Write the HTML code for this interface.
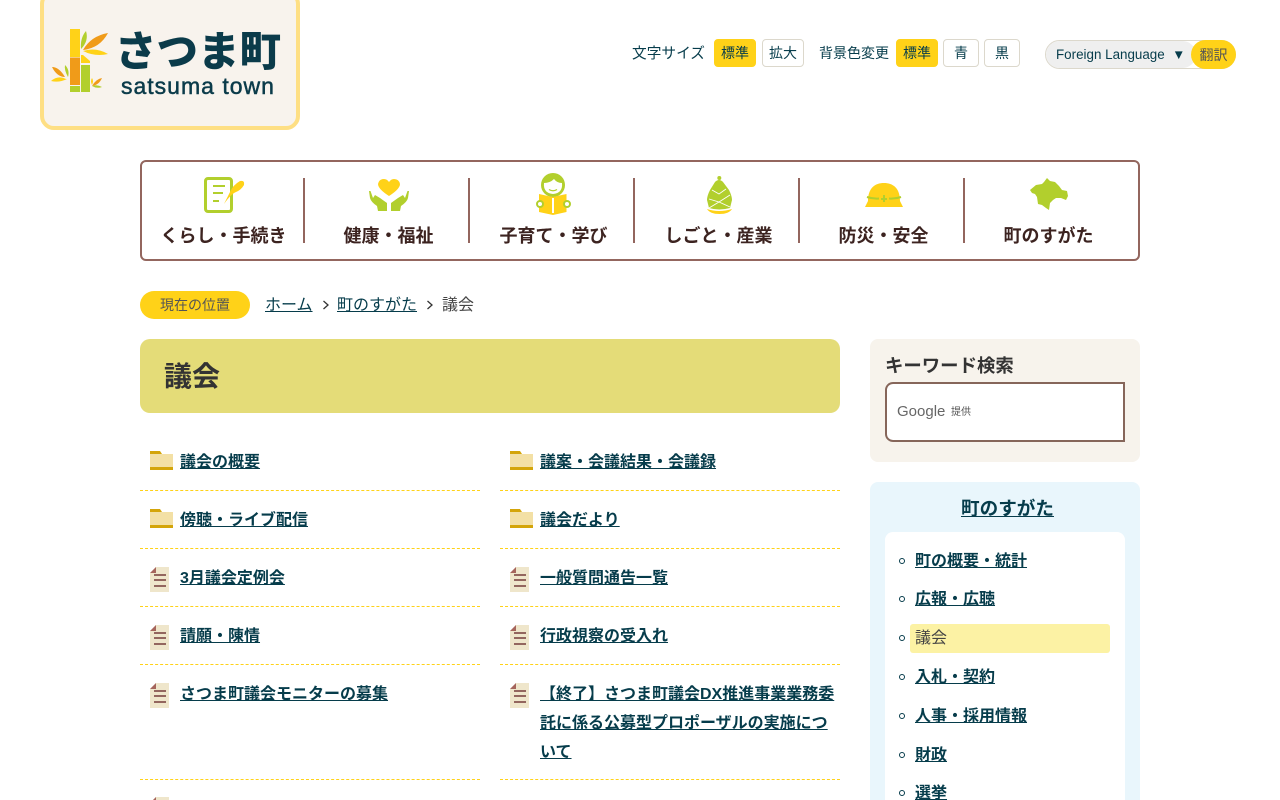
<!DOCTYPE html>
<html lang="ja"><head><meta charset="utf-8"><title>議会 | さつま町</title>
<style>
html,body{margin:0;padding:0;background:#fff;width:1280px;height:800px;overflow:hidden}
body{font-family:"Liberation Sans","Noto Sans CJK JP",sans-serif;color:#333;position:relative}
.a{position:absolute;white-space:nowrap}
a{color:#063c4b}
.logo{left:40px;top:-10px;width:252px;height:132px;background:#f8f3ed;border:4px solid #fedf84;border-radius:14px}
.sz{top:44px;font-size:14.7px;line-height:20px;color:#063c4b}
.btn{top:39px;height:26px;line-height:27px;text-align:center;font-size:14px;color:#063c4b;background:#fff;border:1px solid #dcd8cc;border-radius:4px}
.btn.on{background:#ffd218;border-color:#ffd218}
.nav{left:140px;top:160px;width:996px;height:97px;border:2px solid #93665e;border-radius:6px}
.sep{top:178px;width:2px;height:65px;background:#93665e}
.nt{top:223px;width:165px;text-align:center;font-size:18px;line-height:26px;font-weight:700;color:#3c2320}
.ti{left:140px;top:339px;width:700px;height:74px;background:#e4dc78;border-radius:10px}
.h1{left:164px;top:357px;font-size:28px;line-height:40px;font-weight:700;color:#333}
.l{font-size:16px;font-weight:700;line-height:29px}
.dash{height:0;border-top:1px dashed #ffd218;width:340px}
.sl{left:915px;font-size:16px;font-weight:700;line-height:24px}
.dot{left:899px;width:4px;height:4px;border:1.5px solid #063c4b;border-radius:50%}
</style></head><body>

<div class="a logo"></div>
<svg class="a" style="left:50px;top:28px" width="60" height="66" viewBox="0 0 60 66">
<rect x="20" y="1" width="10" height="28" fill="#ffd218"/><rect x="20" y="29.500" width="10" height="27.500" fill="#f09b19"/><rect x="20" y="58" width="10" height="6" fill="#b2cf2d"/>
<path d="M31 27H33L40 33V35H31Z" fill="#ffd218"/><rect x="31" y="37" width="9" height="27" fill="#b2cf2d"/>
<path d="M31 21Q30 10 36 3 39 13 31 21Z" fill="#b2cf2d"/><path d="M33 22Q41 8 58 5 50 20 33 22Z" fill="#f09b19"/><path d="M33 23Q46 19 58 26 45 29 33 23Z" fill="#ffd218"/>
<path d="M15 49Q9 39 2 39 7 49 15 49Z" fill="#f09b19"/><path d="M16 51Q8 47 1 53 9 55 17 51Z" fill="#ffd218"/><path d="M18 49Q14 42 15 37 20 42 18 49Z" fill="#b2cf2d"/>
<path d="M42 58Q46 51 52 50 49 57 42 58Z" fill="#f09b19"/><path d="M42 58Q47 56 52 59 47 61 42 58Z" fill="#b2cf2d"/><path d="M42 57Q40 53 42 50 44 53 42 57Z" fill="#ffd218"/>
</svg>
<div class="a" style="left:115px;top:24px;font-size:41.5px;line-height:56px;font-weight:900;color:#0b3b4a">さつま町</div>
<div class="a" style="left:121px;top:71px;font-size:23px;line-height:30px;color:#0b3b4a;letter-spacing:1px;font-weight:400;-webkit-text-stroke:.5px #0b3b4a">satsuma town</div>

<div class="a sz" style="left:632px">文字サイズ</div>
<div class="a btn on" style="left:714px;width:40px">標準</div>
<div class="a btn" style="left:762px;width:40px">拡大</div>
<div class="a sz" style="left:819px;top:43px;font-size:14px">背景色変更</div>
<div class="a btn on" style="left:896px;width:40px">標準</div>
<div class="a btn" style="left:943px;width:34px">青</div>
<div class="a btn" style="left:984px;width:34px">黒</div>
<div class="a" style="left:1045px;top:40px;width:189px;height:27px;border:1px solid #dcd8cc;border-radius:15px;background:#fff"></div>
<div class="a" style="left:1046px;top:41px;width:150px;height:27px;background:#efefef;border-radius:14px;font-size:13.4px;line-height:27px;color:#063c4b;text-indent:10px">Foreign Language&nbsp; ▼</div>
<div class="a" style="left:1191px;top:40px;width:45px;height:29px;background:#ffd218;border-radius:15px;text-align:center;font-size:14px;line-height:31px;color:#555">翻訳</div>

<div class="a nav"></div>
<div class="a sep" style="left:303px"></div><div class="a sep" style="left:468px"></div><div class="a sep" style="left:633px"></div><div class="a sep" style="left:798px"></div><div class="a sep" style="left:963px"></div>

<svg class="a" style="left:203px;top:175px" width="44" height="40" viewBox="0 0 44 40">
<rect x="2.500" y="3.500" width="26" height="33" rx="2.500" fill="#fff" stroke="#b2cf2d" stroke-width="3"/>
<path d="M10 11H22M10 18H20M10 26H16" stroke="#b2cf2d" stroke-width="2"/>
<path d="M21 29 27 17Q30 10 37 6 42 5 41 10 38 15 33 17 28 19 21 29Z" fill="#ffd218"/></svg>
<svg class="a" style="left:368px;top:178px" width="42" height="34" viewBox="0 0 42 34">
<path d="M21 18Q10 11 10 6 11 1 16 1 19 1 21 4 23 1 26 1 31 1 32 6 32 11 21 18Z" fill="#ffd218"/>
<path d="M1 13 2.500 13 5 20 7 17 12 20 19 25V33H10L9 28Q3 24 2 20Z" fill="#b2cf2d"/>
<path d="M41 13 39.500 13 37 20 35 17 30 20 23 25V33H32L33 28Q39 24 40 20Z" fill="#b2cf2d"/></svg>
<svg class="a" style="left:534px;top:173px" width="38" height="44" viewBox="0 0 38 44">
<circle cx="19" cy="12" r="12" fill="#b2cf2d"/>
<path d="M10 10Q16 10 20 6 23 10 28 10 29 20 19 21 9 20 10 10Z" fill="#fff"/>
<path d="M15 16.500Q19 19 23 16.500" stroke="#b2cf2d" stroke-width="1.300" fill="none"/>
<path d="M5 21 18.500 24 32.500 21V39L19 42 5 39Z" fill="#ffd218"/>
<rect x="18" y="25" width="2" height="15" fill="#fff"/>
<circle cx="6" cy="31" r="3" fill="#fff" stroke="#b2cf2d" stroke-width="2"/><circle cx="33" cy="31" r="3" fill="#fff" stroke="#b2cf2d" stroke-width="2"/></svg>
<svg class="a" style="left:704px;top:175px" width="30" height="40" viewBox="0 0 30 40">
<circle cx="15.300" cy="3" r="2" fill="#b2cf2d"/>
<path d="M11 7Q15 3 19 7L25 15Q28 21 28 25L26 33Q15 36 5 33L3 25Q3 21 6 15Z" fill="#b2cf2d"/>
<path d="M8 15 15 19 22 14M5 24 15 27 26 20M5 33 15 27 26 32" stroke="#fff" stroke-width=".9" fill="none"/>
<path d="M3 34Q15 38 28 34 25 39 15.500 39 6 39 3 34Z" fill="#ffd218"/></svg>
<svg class="a" style="left:864px;top:182px" width="40" height="26" viewBox="0 0 40 26">
<path d="M1 25 4 19C4 6 11 1 20 1 29 1 36 6 36 19L39 25Z" fill="#ffd218"/>
<path d="M3 15Q9 17 15 16.500M25 16.500Q31 17 37 15M17 17H23M20 13V20" stroke="#b2cf2d" stroke-width="2" fill="none"/></svg>
<svg class="a" style="left:1029px;top:177px" width="40" height="34" viewBox="0 0 40 34">
<path d="M1 13 7 8 13 7 15 5 18 1 21 4 26 5 30 9 33 13 38 14 39 19 37 23 32 21 27 21 24 23 21 26 20 33 17 31 13 28 9 27 8 20 6 17 3 16Z" fill="#b2cf2d"/></svg>

<div class="a nt" style="left:141px">くらし・手続き</div>
<div class="a nt" style="left:306px">健康・福祉</div>
<div class="a nt" style="left:471px">子育て・学び</div>
<div class="a nt" style="left:636px">しごと・産業</div>
<div class="a nt" style="left:801px">防災・安全</div>
<div class="a nt" style="left:966px">町のすがた</div>

<div class="a" style="left:140px;top:291px;width:110px;height:28px;background:#ffd218;border-radius:14px;text-align:center;font-size:14px;line-height:29px;color:#555">現在の位置</div>
<a class="a" href="#" style="left:265px;top:294px;font-size:16px;line-height:24px">ホーム</a>
<svg class="a" style="left:322px;top:300px" width="8" height="10"><path d="M1.500 1 6 5 1.500 9" stroke="#333" stroke-width="1.300" fill="none"/></svg>
<a class="a" href="#" style="left:337px;top:294px;font-size:16px;line-height:24px">町のすがた</a>
<svg class="a" style="left:426px;top:300px" width="8" height="10"><path d="M1.500 1 6 5 1.500 9" stroke="#333" stroke-width="1.300" fill="none"/></svg>
<div class="a" style="left:442px;top:294px;font-size:16px;line-height:24px;color:#444">議会</div>

<div class="a ti"></div><div class="a h1">議会</div>

<svg width="0" height="0" style="position:absolute"><defs>
<g id="f"><path d="M0 0H10L12 3H0Z" fill="#d4a50a"/><path d="M0 3H23V16H0Z" fill="#f3e0a5"/><rect y="16" width="23" height="3" fill="#d4a50a"/></g>
<g id="d"><path d="M6 0H19V25H0V6Z" fill="#efe6cb"/><path d="M6 0V6H0Z" fill="#a5655c"/><path d="M4 8H16M4 13H16M4 19H16" stroke="#93665e" stroke-width="2"/></g>
</defs></svg>

<svg class="a" style="left:150px;top:451px" width="24" height="20"><use href="#f"/></svg>
<a class="a l" href="#" style="left:180px;top:448px">議会の概要</a><div class="a dash" style="left:140px;top:490px"></div>
<svg class="a" style="left:510px;top:451px" width="24" height="20"><use href="#f"/></svg>
<a class="a l" href="#" style="left:540px;top:448px">議案・会議結果・会議録</a><div class="a dash" style="left:500px;top:490px"></div>

<svg class="a" style="left:150px;top:509px" width="24" height="20"><use href="#f"/></svg>
<a class="a l" href="#" style="left:180px;top:506px">傍聴・ライブ配信</a><div class="a dash" style="left:140px;top:548px"></div>
<svg class="a" style="left:510px;top:509px" width="24" height="20"><use href="#f"/></svg>
<a class="a l" href="#" style="left:540px;top:506px">議会だより</a><div class="a dash" style="left:500px;top:548px"></div>

<svg class="a" style="left:150px;top:567px" width="19" height="25"><use href="#d"/></svg>
<a class="a l" href="#" style="left:180px;top:564px">3月議会定例会</a><div class="a dash" style="left:140px;top:606px"></div>
<svg class="a" style="left:510px;top:567px" width="19" height="25"><use href="#d"/></svg>
<a class="a l" href="#" style="left:540px;top:564px">一般質問通告一覧</a><div class="a dash" style="left:500px;top:606px"></div>

<svg class="a" style="left:150px;top:625px" width="19" height="25"><use href="#d"/></svg>
<a class="a l" href="#" style="left:180px;top:622px">請願・陳情</a><div class="a dash" style="left:140px;top:664px"></div>
<svg class="a" style="left:510px;top:625px" width="19" height="25"><use href="#d"/></svg>
<a class="a l" href="#" style="left:540px;top:622px">行政視察の受入れ</a><div class="a dash" style="left:500px;top:664px"></div>

<svg class="a" style="left:150px;top:683px" width="19" height="25"><use href="#d"/></svg>
<a class="a l" href="#" style="left:180px;top:680px">さつま町議会モニターの募集</a><div class="a dash" style="left:140px;top:779px"></div>
<svg class="a" style="left:510px;top:683px" width="19" height="25"><use href="#d"/></svg>
<a class="a l" href="#" style="left:540px;top:680px">【終了】さつま町議会DX推進事業業務委</a>
<a class="a l" href="#" style="left:540px;top:709px">託に係る公募型プロポーザルの実施につ</a>
<a class="a l" href="#" style="left:540px;top:738px">いて</a><div class="a dash" style="left:500px;top:779px"></div>
<svg class="a" style="left:150px;top:797px" width="19" height="25"><use href="#d"/></svg>

<div class="a" style="left:870px;top:339px;width:270px;height:123px;background:#f7f3ec;border-radius:8px"></div>
<div class="a" style="left:885px;top:352px;font-size:18.400px;line-height:28px;font-weight:700;color:#333">キーワード検索</div>
<div class="a" style="left:885px;top:382px;width:236px;height:56px;background:#fff;border:2px solid #86665a;border-radius:8px 0 0 8px"></div>
<div class="a" style="left:897px;top:402px;font-size:15px;line-height:20px;color:#666">Google</div>
<div class="a" style="left:951px;top:405px;font-size:10px;line-height:16px;color:#555">提供</div>

<div class="a" style="left:870px;top:482px;width:270px;height:340px;background:#e9f6fc;border-radius:8px"></div>
<a class="a" href="#" style="left:961px;top:495px;font-size:18.600px;line-height:28px;font-weight:700">町のすがた</a>
<div class="a" style="left:885px;top:532px;width:240px;height:300px;background:#fff;border-radius:8px"></div>
<div class="a" style="left:910px;top:624px;width:200px;height:29px;background:#fcf2a4;border-radius:3px"></div>

<div class="a dot" style="top:558px"></div><a class="a sl" href="#" style="top:550px">町の概要・統計</a>
<div class="a dot" style="top:596px"></div><a class="a sl" href="#" style="top:588px">広報・広聴</a>
<div class="a dot" style="top:635px"></div><div class="a sl" style="top:627px;font-weight:400;color:#444">議会</div>
<div class="a dot" style="top:674px"></div><a class="a sl" href="#" style="top:666px">入札・契約</a>
<div class="a dot" style="top:713px"></div><a class="a sl" href="#" style="top:705px">人事・採用情報</a>
<div class="a dot" style="top:752px"></div><a class="a sl" href="#" style="top:744px">財政</a>
<div class="a dot" style="top:790px"></div><a class="a sl" href="#" style="top:782px">選挙</a>

</body></html>
